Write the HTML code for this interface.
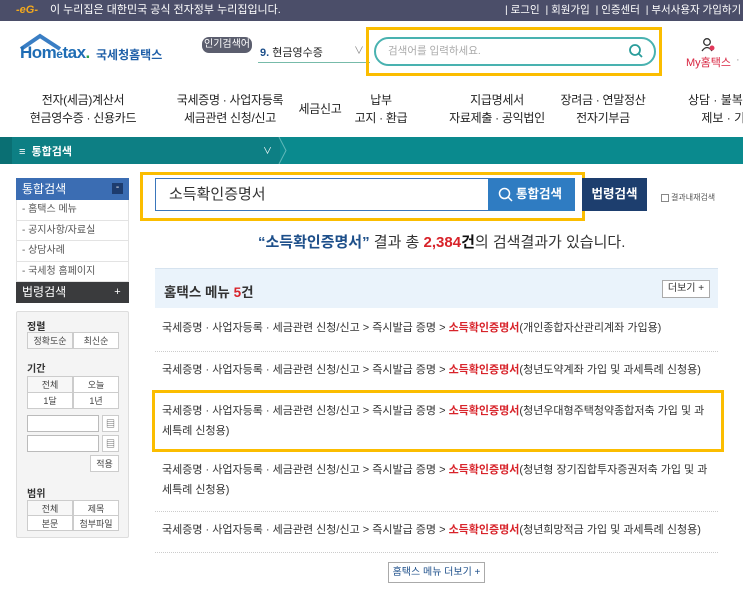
<!DOCTYPE html>
<html><head><meta charset="utf-8"><style>
*{margin:0;padding:0;box-sizing:border-box}
body{width:743px;height:607px;overflow:hidden;background:#fff;font-family:"Liberation Sans","Noto Sans CJK KR",sans-serif;color:#333;position:relative}
.a{position:absolute;white-space:nowrap}
.top{left:0;top:0;width:743px;height:21px;background:#4b4e69;color:#fff;font-size:11px;line-height:21px}
.nav{font-size:12px;color:#222;text-align:center;line-height:18px;transform:translateX(-50%);letter-spacing:-0.3px}
.side div{height:20.5px;border-bottom:1px solid #e3e3e3;font-size:10px;color:#555;line-height:20px;padding-left:5px}
.fb{border:1px solid #ccc;background:#fff;font-size:9px;color:#444;text-align:center;line-height:16px}
.row{left:162px;font-size:11px;color:#333;line-height:20px;width:560px;white-space:normal}
.row b{color:#d8232a;font-weight:bold}
.sep{left:155px;width:563px;border-top:1px dotted #ccc;height:0}
.hl{border:3px solid #fbbd00}
</style></head><body>
<div class="a top"><span style="position:absolute;left:16px;color:#f3a81d;font-weight:bold;font-style:italic">-eG-</span><span style="position:absolute;left:50px">이 누리집은 대한민국 공식 전자정부 누리집입니다.</span><span style="position:absolute;left:505px;font-size:10.5px">| 로그인 &nbsp;| 회원가입 &nbsp;| 인증센터 &nbsp;| 부서사용자 가입하기</span></div>

<svg class="a" style="left:18px;top:33px" width="50" height="20"><path d="M3 16 L22 3 L42 16" fill="none" stroke="#3a7ec4" stroke-width="4"/></svg>
<div class="a" style="left:20px;top:43px;font-size:17px;font-weight:bold;color:#1f6db5;letter-spacing:-0.5px">Hom<span style="font-size:12px">e</span>tax<span style="color:#2aa34a">.</span></div>
<div class="a" style="left:96px;top:46px;font-size:12px;color:#1f5fa8;font-weight:bold">국세청홈택스</div>

<div class="a" style="left:202px;top:37px;width:50px;height:16px;border-radius:7px;background:#5b5e6e;color:#fff;font-size:10px;line-height:16px;text-align:center">인기검색어</div>
<div class="a" style="left:260px;top:44px;font-size:11px;color:#222"><b style="color:#1d4f8a">9.</b> 현금영수증</div>
<div class="a" style="left:354px;top:42px;font-size:10px;color:#888">∨</div>
<div class="a" style="left:258px;top:62px;width:112px;border-top:1px solid #7ba;"></div>
<div class="a hl" style="left:366px;top:27px;width:296px;height:49px"></div>
<div class="a" style="left:374px;top:37px;width:282px;height:29px;border:2px solid #49b2b0;border-radius:15px;font-size:10.5px;color:#aaa;line-height:25px;padding-left:12px">검색어를 입력하세요.</div>
<svg class="a" style="left:628px;top:43px" width="16" height="16"><circle cx="7" cy="7" r="5" fill="none" stroke="#2a9d9b" stroke-width="1.8"/><path d="M11 11 L14 14" stroke="#2a9d9b" stroke-width="1.8"/></svg>
<svg class="a" style="left:700px;top:37px" width="16" height="16"><circle cx="7" cy="5" r="3.3" fill="none" stroke="#333" stroke-width="1.3"/><path d="M2 14 Q7 7 12 14" fill="none" stroke="#333" stroke-width="1.3"/><circle cx="12" cy="11" r="2.5" fill="#e2375a"/></svg>
<div class="a" style="left:686px;top:54px;font-size:11px;color:#d8233f">My홈택스</div>
<div class="a" style="left:736px;top:54px;font-size:11px;color:#999">·</div>

<div class="a nav" style="left:83px;top:91px">전자(세금)계산서<br>현금영수증 · 신용카드</div>
<div class="a nav" style="left:230px;top:91px">국세증명 · 사업자등록<br>세금관련 신청/신고</div>
<div class="a nav" style="left:320px;top:100px">세금신고</div>
<div class="a nav" style="left:381px;top:91px">납부<br>고지 · 환급</div>
<div class="a nav" style="left:497px;top:91px">지급명세서<br>자료제출 · 공익법인</div>
<div class="a nav" style="left:603px;top:91px">장려금 · 연말정산<br>전자기부금</div>
<div class="a" style="left:688px;top:91px;font-size:12px;line-height:18px;color:#222">상담 · 불복<br>&nbsp;&nbsp;&nbsp;&nbsp;제보 · 기</div>

<div class="a" style="left:0;top:137px;width:743px;height:27px;background:#0a8a8e"></div>
<div class="a" style="left:0;top:137px;width:12px;height:27px;background:#0a6f73"></div>
<div class="a" style="left:12px;top:137px;width:268px;height:27px;background:#0d7f84"></div>
<svg class="a" style="left:278px;top:137px" width="10" height="27"><path d="M1 0 L8 13.5 L1 27" fill="none" stroke="#5fb8b9" stroke-width="1"/></svg>
<div class="a" style="left:19px;top:143px;font-size:11px;color:#fff;font-weight:bold">≡ &nbsp;통합검색</div>
<div class="a" style="left:263px;top:144px;font-size:9px;color:#fff">∨</div>

<div class="a" style="left:16px;top:178px;width:113px;height:22px;background:#3b6db3;color:#fff;font-size:12px;line-height:22px;padding-left:6px">통합검색<span style="position:absolute;right:6px;top:5px;width:11px;height:11px;background:#1d3c6e;font-size:10px;line-height:10px;text-align:center">-</span></div>
<div class="a side" style="left:16px;top:200px;width:113px;border-left:1px solid #e3e3e3;border-right:1px solid #e3e3e3"><div>- 홈택스 메뉴</div><div>- 공지사항/자료실</div><div>- 상담사례</div><div>- 국세청 홈페이지</div></div>
<div class="a" style="left:16px;top:282px;width:113px;height:21px;background:#3a3b3d;color:#fff;font-size:12px;line-height:21px;padding-left:6px">법령검색<span style="position:absolute;right:6px;top:5px;width:11px;height:11px;font-size:11px;line-height:10px;text-align:center">+</span></div>
<div class="a" style="left:16px;top:311px;width:113px;height:227px;background:#f4f4f4;border:1px solid #ddd;border-radius:2px"></div>
<div class="a" style="left:27px;top:318px;font-size:10px;font-weight:bold;color:#333">정렬</div>
<div class="a fb" style="left:27px;top:332px;width:46px;height:17px;background:#f7f7f7">정확도순</div>
<div class="a fb" style="left:73px;top:332px;width:46px;height:17px">최신순</div>
<div class="a" style="left:27px;top:360px;font-size:10px;font-weight:bold;color:#333">기간</div>
<div class="a fb" style="left:27px;top:376px;width:46px;height:17px;background:#f7f7f7">전체</div>
<div class="a fb" style="left:73px;top:376px;width:46px;height:17px">오늘</div>
<div class="a fb" style="left:27px;top:392px;width:46px;height:17px">1달</div>
<div class="a fb" style="left:73px;top:392px;width:46px;height:17px">1년</div>
<div class="a" style="left:27px;top:415px;width:72px;height:17px;border:1px solid #bbb;background:#fff"></div>
<div class="a fb" style="left:102px;top:415px;width:17px;height:17px">▤</div>
<div class="a" style="left:27px;top:435px;width:72px;height:17px;border:1px solid #bbb;background:#fff"></div>
<div class="a fb" style="left:102px;top:435px;width:17px;height:17px">▤</div>
<div class="a fb" style="left:90px;top:455px;width:29px;height:17px">적용</div>
<div class="a" style="left:27px;top:485px;font-size:10px;font-weight:bold;color:#333">범위</div>
<div class="a fb" style="left:27px;top:500px;width:46px;height:16px;background:#f7f7f7">전체</div>
<div class="a fb" style="left:73px;top:500px;width:46px;height:16px">제목</div>
<div class="a fb" style="left:27px;top:515px;width:46px;height:16px">본문</div>
<div class="a fb" style="left:73px;top:515px;width:46px;height:16px">첨부파일</div>

<div class="a hl" style="left:140px;top:172px;width:445px;height:49px"></div>
<div class="a" style="left:155px;top:178px;width:334px;height:33px;border:1px solid #3a76bb;font-size:15px;line-height:31px;padding-left:13px;color:#333">소득확인증명서</div>
<div class="a" style="left:488px;top:178px;width:87px;height:33px;background:#2f7cc2;color:#fff;font-size:12.5px;font-weight:bold;line-height:33px;padding-left:28px">통합검색</div>
<svg class="a" style="left:498px;top:187px" width="16" height="16"><circle cx="6.5" cy="6.5" r="5" fill="none" stroke="#fff" stroke-width="1.5"/><path d="M10 10 L14 14" stroke="#fff" stroke-width="1.5"/></svg>
<div class="a" style="left:582px;top:178px;width:65px;height:33px;background:#1d3e6e;color:#fff;font-size:12.5px;font-weight:bold;line-height:33px;text-align:center">법령검색</div>
<div class="a" style="left:661px;top:194px;width:8px;height:8px;border:1px solid #888"></div>
<div class="a" style="left:671px;top:192px;font-size:8px;color:#555">결과내재검색</div>

<div class="a" style="left:258px;top:231px;font-size:15px;color:#333"><b style="color:#1d4f8a">“소득확인증명서”</b> 결과 총 <b style="color:#d8232a">2,384</b><b style="color:#111">건</b>의 검색결과가 있습니다.</div>

<div class="a" style="left:155px;top:268px;width:563px;height:40px;background:#eaf3fb;border-top:1px solid #d6e3ef"></div>
<div class="a" style="left:164px;top:281px;font-size:13.5px;font-weight:bold;color:#333">홈택스 메뉴 <span style="color:#d8232a">5</span>건</div>
<div class="a" style="left:662px;top:280px;width:48px;height:18px;border:1px solid #aaa;background:#fff;font-size:10px;line-height:16px;text-align:center;color:#333">더보기 +</div>

<div class="a row" style="top:318px">국세증명 · 사업자등록 · 세금관련 신청/신고 &gt; 즉시발급 증명 &gt; <b>소득확인증명서</b>(개인종합자산관리계좌 가입용)</div>
<div class="a sep" style="top:351px"></div>
<div class="a row" style="top:360px">국세증명 · 사업자등록 · 세금관련 신청/신고 &gt; 즉시발급 증명 &gt; <b>소득확인증명서</b>(청년도약계좌 가입 및 과세특례 신청용)</div>
<div class="a hl" style="left:152px;top:390px;width:572px;height:62px"></div>
<div class="a row" style="top:401px">국세증명 · 사업자등록 · 세금관련 신청/신고 &gt; 즉시발급 증명 &gt; <b>소득확인증명서</b>(청년우대형주택청약종합저축 가입 및 과<br>세특례 신청용)</div>
<div class="a row" style="top:460px">국세증명 · 사업자등록 · 세금관련 신청/신고 &gt; 즉시발급 증명 &gt; <b>소득확인증명서</b>(청년형 장기집합투자증권저축 가입 및 과<br>세특례 신청용)</div>
<div class="a sep" style="top:511px"></div>
<div class="a row" style="top:520px">국세증명 · 사업자등록 · 세금관련 신청/신고 &gt; 즉시발급 증명 &gt; <b>소득확인증명서</b>(청년희망적금 가입 및 과세특례 신청용)</div>
<div class="a sep" style="top:552px"></div>
<div class="a" style="left:388px;top:562px;width:97px;height:21px;border:1px solid #aaa;background:#fff;font-size:10px;line-height:19px;text-align:center;color:#1d4f8a">홈택스 메뉴 더보기 +</div>
</body></html>
